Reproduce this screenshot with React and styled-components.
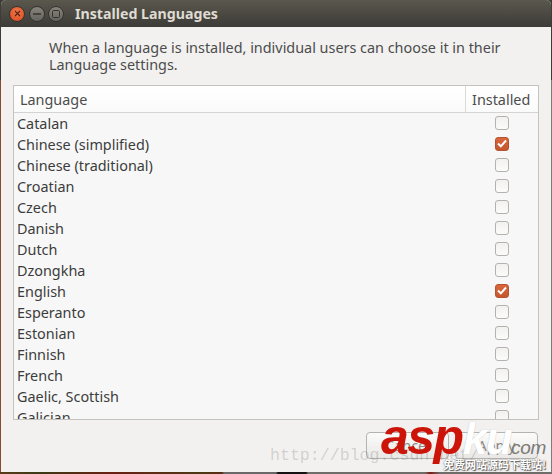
import React from "react";
import styled, { createGlobalStyle } from "styled-components";

const GlobalStyle = createGlobalStyle`
  html, body {
    margin: 0;
    padding: 0;
    width: 552px;
    height: 474px;
    overflow: hidden;
    background: #2a2622;
  }
`;

const Desktop = styled.div`
  position: relative;
  width: 552px;
  height: 474px;
  overflow: hidden;
  padding: 0 1px 2px 1px;
  box-sizing: border-box;
  background:
    linear-gradient(90deg, #5a3a18 0, #3c3a14 40px, #6a2012 110px, #4a3a14 200px, #5a2a10 222px, #6a6866 224px, #6a6866 276px, #141210 278px, #141210 306px, #6f6d6a 308px, #6f6d6a 425px, #7a1a10 430px, #6f6d6a 440px) bottom / 100% 2px no-repeat,
    linear-gradient(90deg, #8a4a30 0, #8a4a30 1px, #7d7c7a 551px) 0 80px / 100% 100% no-repeat,
    #3e3c37;
  font-family: "Noto Sans", "Open Sans", sans-serif;
`;

const Window = styled.div`
  display: flex;
  flex-direction: column;
  height: 100%;
  background: #f2f1f0;
  border-radius: 5px 5px 0 0;
  overflow: hidden;
`;

const TitleBar = styled.div`
  display: flex;
  align-items: center;
  flex: none;
  height: 27px;
  padding-left: 8px;
  background: linear-gradient(180deg, #5a574d 0%, #3c3b37 100%);
`;

const WinButton = styled.span`
  display: flex;
  align-items: center;
  justify-content: center;
  box-sizing: border-box;
  width: 16px;
  height: 16px;
  margin-right: 3.5px;
  border-radius: 50%;
  background: ${(p) =>
    p.$close
      ? "radial-gradient(circle at 50% 35%, #f0764a, #d94a1f)"
      : "linear-gradient(180deg, #85837b, #66645d)"};
  border: 1px solid #35332e;
`;

const Title = styled.span`
  margin-left: 7.5px;
  color: #dfdbd2;
  font-size: 14.2px;
  font-weight: 700;
`;

const Description = styled.p`
  margin: 0;
  flex: none;
  padding: 12px 0 0 48px;
  height: 46px;
  color: #4c4c4c;
  font-size: 14.4px;
  line-height: 17px;
  white-space: nowrap;
`;

const ListBox = styled.div`
  flex: none;
  display: flex;
  flex-direction: column;
  box-sizing: border-box;
  height: 335px;
  margin: 0 12px;
  border: 1px solid #c4c2bd;
  background: #f7f7f7;
  overflow: hidden;
`;

const Header = styled.div`
  flex: none;
  display: grid;
  grid-template-columns: 1fr 73px;
  height: 27px;
  background: linear-gradient(180deg, #ffffff 0%, #fafafa 100%);
  border-bottom: 1px solid #d6d4d0;
  box-sizing: border-box;
`;

const HeaderCell = styled.div`
  display: flex;
  align-items: center;
  padding-left: 6px;
  border-left: ${(p) => (p.$divider ? "1px solid #dcdad5" : "none")};
  color: #4c4c4c;
  font-size: 14.4px;
`;

const Row = styled.div`
  flex: none;
  display: grid;
  grid-template-columns: 1fr 73px;
  align-items: center;
  height: 21px;
  color: #3c3c3c;
  font-size: 14.4px;
`;

const RowLabel = styled.span`
  padding-left: 3px;
`;

const CheckCell = styled.span`
  display: flex;
  justify-content: center;
  padding-bottom: 2px;
`;

const Check = styled.span`
  display: flex;
  align-items: center;
  justify-content: center;
  box-sizing: border-box;
  width: 14px;
  height: 14px;
  border-radius: 3px;
  border: 1px solid ${(p) => (p.$on ? "#b5532c" : "#b4b2ad")};
  background: ${(p) =>
    p.$on ? "linear-gradient(180deg, #d9673a, #c4572f)" : "linear-gradient(180deg, #f2f1f0, #fbfbfa)"};
`;

const Footer = styled.div`
  flex: 1;
  display: flex;
  justify-content: flex-end;
  gap: 6px;
  padding: 12px 13px 0 0;
`;

const Button = styled.button`
  box-sizing: border-box;
  width: 83px;
  height: 27px;
  padding: 0;
  border: 1px solid #b5b3ae;
  border-radius: 4px;
  background: linear-gradient(180deg, #fbfbfa, #e9e8e6);
  color: #8a8882;
  font-family: inherit;
  font-size: 14.4px;
`;

const UrlMark = styled.div`
  position: absolute;
  left: 270px;
  top: 446px;
  color: rgba(110, 110, 110, 0.26);
  font-family: "Liberation Mono", monospace;
  font-size: 16.6px;
  line-height: 19px;
  white-space: nowrap;
`;

const Logo = styled.div`
  position: absolute;
  left: 381px;
  top: 411px;
  display: flex;
  align-items: baseline;
  font-family: "Liberation Sans", sans-serif;
  font-style: italic;
  font-size: 50px;
  line-height: 52px;
  letter-spacing: -1.5px;
`;

const LogoRed = styled.span`
  color: #cc1408;
  font-weight: 700;
`;

const LogoWhite = styled.span`
  color: #ffffff;
  font-size: 44px;
  font-weight: 700;
  text-shadow: 0 0 1px #b8b8b8;
`;

const LogoCom = styled.span`
  color: #7d7a76;
  font-size: 19px;
  letter-spacing: -0.3px;
`;

const Slogan = styled.div`
  position: absolute;
  left: 443px;
  top: 457px;
  color: #ffffff;
  font-family: "Noto Sans CJK SC", sans-serif;
  font-size: 11px;
  font-weight: 700;
  line-height: 14px;
  white-space: nowrap;
  text-shadow: 1px 1px 1px #555, 0 0 1px #555;
`;

const languages = [
  ["Catalan", false],
  ["Chinese (simplified)", true],
  ["Chinese (traditional)", false],
  ["Croatian", false],
  ["Czech", false],
  ["Danish", false],
  ["Dutch", false],
  ["Dzongkha", false],
  ["English", true],
  ["Esperanto", false],
  ["Estonian", false],
  ["Finnish", false],
  ["French", false],
  ["Gaelic, Scottish", false],
  ["Galician", false],
];

function App() {
  return (
    <Desktop>
      <GlobalStyle />
      <Window>
        <TitleBar>
          <WinButton $close>
            <svg width="7" height="7" viewBox="0 0 7 7">
              <path d="M1 1l5 5M6 1l-5 5" stroke="#5a2410" strokeWidth="1.2" />
            </svg>
          </WinButton>
          <WinButton>
            <svg width="8" height="8" viewBox="0 0 8 8">
              <path d="M0 4h8" stroke="#35332e" strokeWidth="1.5" />
            </svg>
          </WinButton>
          <WinButton>
            <svg width="8" height="8" viewBox="0 0 8 8">
              <rect x="0.5" y="0.5" width="7" height="7" rx="1" fill="none" stroke="#35332e" />
            </svg>
          </WinButton>
          <Title>Installed Languages</Title>
        </TitleBar>
        <Description>
          When a language is installed, individual users can choose it in their
          <br />
          Language settings.
        </Description>
        <ListBox>
          <Header>
            <HeaderCell>Language</HeaderCell>
            <HeaderCell $divider>Installed</HeaderCell>
          </Header>
          {languages.map(([name, installed]) => (
            <Row key={name}>
              <RowLabel>{name}</RowLabel>
              <CheckCell>
                <Check $on={installed}>
                  {installed && (
                    <svg width="10" height="9" viewBox="0 0 10 9">
                      <path d="M1 4.5l2.8 2.8L9 1.5" fill="none" stroke="#fff" strokeWidth="2" />
                    </svg>
                  )}
                </Check>
              </CheckCell>
            </Row>
          ))}
        </ListBox>
        <Footer>
          <Button>Cancel</Button>
          <Button>Apply</Button>
        </Footer>
      </Window>
      <UrlMark>http://blog.csdn.net/</UrlMark>
      <Logo>
        <LogoRed>asp</LogoRed>
        <LogoWhite>ku</LogoWhite>
        <LogoCom>com</LogoCom>
      </Logo>
      <Slogan>免费网站源码下载站!</Slogan>
    </Desktop>
  );
}

export default App;
